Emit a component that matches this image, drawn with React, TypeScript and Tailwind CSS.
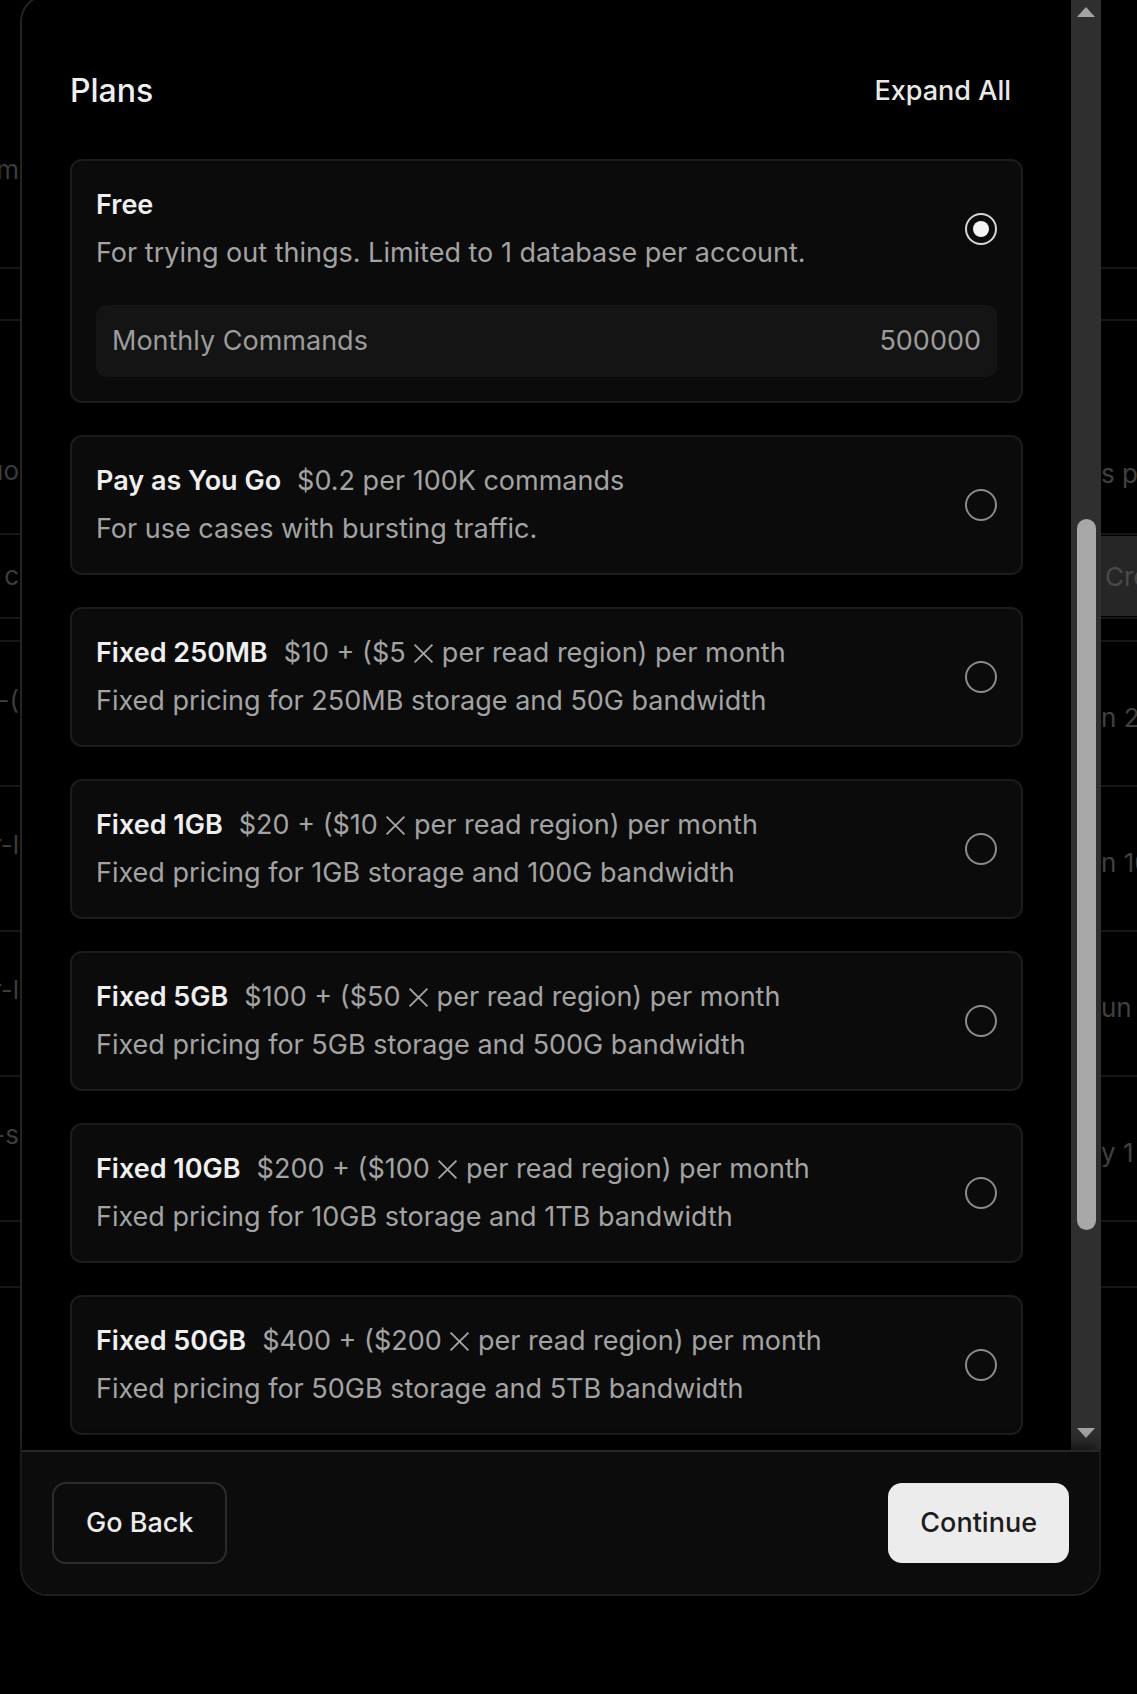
import React from "react";

type Plan = {
  name: string;
  price?: string;
  base?: string;
  per?: string;
  desc: string;
};

const plans: Plan[] = [
  { name: "Pay as You Go", price: "$0.2 per 100K commands", desc: "For use cases with bursting traffic." },
  { name: "Fixed 250MB", base: "$10", per: "$5", desc: "Fixed pricing for 250MB storage and 50G bandwidth" },
  { name: "Fixed 1GB", base: "$20", per: "$10", desc: "Fixed pricing for 1GB storage and 100G bandwidth" },
  { name: "Fixed 5GB", base: "$100", per: "$50", desc: "Fixed pricing for 5GB storage and 500G bandwidth" },
  { name: "Fixed 10GB", base: "$200", per: "$100", desc: "Fixed pricing for 10GB storage and 1TB bandwidth" },
  { name: "Fixed 50GB", base: "$400", per: "$200", desc: "Fixed pricing for 50GB storage and 5TB bandwidth" },
  { name: "Fixed 100GB", base: "$800", per: "$400", desc: "Fixed pricing for 100GB storage and 10TB bandwidth" },
];

function Cross() {
  return (
    <svg
      width="21"
      height="21"
      viewBox="0 0 20 20"
      fill="none"
      stroke="currentColor"
      strokeWidth="1.8"
      className="inline-block align-[-2px]"
    >
      <path d="M1.5 1.5 18.5 18.5M18.5 1.5 1.5 18.5" />
    </svg>
  );
}

function Radio({ checked }: { checked?: boolean }) {
  return (
    <span
      className={
        checked
          ? "flex h-[32px] w-[32px] shrink-0 items-center justify-center rounded-full border-2 border-[#d6d6d6]"
          : "flex h-[32px] w-[32px] shrink-0 items-center justify-center rounded-full border-2 border-[#8c8c8c]"
      }
    >
      {checked && <span className="h-[16px] w-[16px] rounded-full bg-[#f4f4f4]" />}
    </span>
  );
}

function PlanCard({ plan }: { plan: Plan }) {
  return (
    <div className="rounded-[12px] border-2 border-[#1c1c1c] bg-[#0b0b0b] p-[24px]">
      <div className="flex items-center justify-between gap-6">
        <div className="flex min-w-0 flex-col gap-[8px]">
          <div className="whitespace-nowrap text-[27px] leading-[40px]">
            <span className="mr-[16px] font-semibold text-[#efefef]">{plan.name}</span>
            {plan.price ? (
              <span className="text-[#a3a3a3]">{plan.price}</span>
            ) : (
              <span className="text-[#a3a3a3]">
                {plan.base} + ({plan.per} <Cross /> per read region) per month
              </span>
            )}
          </div>
          <div className="whitespace-nowrap text-[27px] leading-[40px] text-[#a3a3a3]">{plan.desc}</div>
        </div>
        <Radio />
      </div>
    </div>
  );
}

function EdgeRow({
  h,
  left,
  right,
  leftTop,
  rightTop,
}: {
  h: string;
  left: string;
  right: string;
  leftTop: string;
  rightTop: string;
}) {
  return (
    <div className={`flex items-start justify-between border-b-2 border-[#161616] ${h}`}>
      <div className={`flex w-[19px] justify-end overflow-hidden text-[26px] leading-[40px] text-[#3c3c3c] ${leftTop}`}>
        <span className="whitespace-nowrap">{left}</span>
      </div>
      <div className={`w-[36px] overflow-hidden text-[26px] leading-[40px] text-[#404040] ${rightTop}`}>
        <span className="whitespace-nowrap">{right}</span>
      </div>
    </div>
  );
}

function Background() {
  return (
    <div className="flex flex-col">
      <div className="flex h-[269px] flex-col justify-start border-b-2 border-[#161616]">
        <div className="mt-[150px] flex w-[19px] justify-end overflow-hidden text-[26px] leading-[40px] text-[#3c3c3c]">
          <span className="whitespace-nowrap">um</span>
        </div>
      </div>
      <div className="h-[52px] border-b-2 border-[#161616]" />
      <EdgeRow h="h-[214px]" left="uo" right="s pl" leftTop="mt-[130px]" rightTop="mt-[133px]" />
      <div className="flex h-[84px] items-center justify-between border-b-2 border-[#161616]">
        <div className="flex w-[19px] justify-end overflow-hidden text-[26px] leading-[40px] text-[#3c3c3c]">
          <span className="whitespace-nowrap">r c</span>
        </div>
        <div className="w-[36px] overflow-hidden">
          <span className="flex h-[80px] w-[36px] items-center bg-[#262626] pl-[4px] text-[26px] text-[#4a4a4a]">Create</span>
        </div>
      </div>
      <div className="h-[23px] border-b-2 border-[#161616]" />
      <EdgeRow h="h-[145px]" left="r-(" right="n 2" leftTop="mt-[38px]" rightTop="mt-[56px]" />
      <EdgeRow h="h-[145px]" left="r-l" right="n 10" leftTop="mt-[38px]" rightTop="mt-[56px]" />
      <EdgeRow h="h-[145px]" left="r-l" right="un 5" leftTop="mt-[38px]" rightTop="mt-[56px]" />
      <EdgeRow h="h-[145px]" left="r-s" right="y 1" leftTop="mt-[38px]" rightTop="mt-[56px]" />
      <div className="h-[66px] border-b-2 border-[#161616]" />
    </div>
  );
}

export default function App() {
  return (
    <div className="relative h-[1694px] w-full overflow-hidden bg-black font-['Inter',sans-serif] antialiased">
      <Background />

      <div className="absolute left-[20px] top-[-6px] flex h-[1602px] w-[1081px] flex-col rounded-[28px] border-2 border-[#242424] bg-black">
        <div className="flex min-h-0 flex-1">
          <div className="min-w-0 flex-1 overflow-hidden px-[48px] pt-[71px]">
            <div className="flex h-[48px] items-center justify-between">
              <h2 className="text-[32px] font-medium leading-[48px] text-[#efefef]">Plans</h2>
              <button className="mr-[12px] text-[27px] font-medium leading-[40px] text-[#e8e8e8]">Expand All</button>
            </div>

            <div className="mt-[44px] flex flex-col gap-[32px]">
              <div className="rounded-[12px] border-2 border-[#1c1c1c] bg-[#0b0b0b] p-[24px]">
                <div className="flex items-center justify-between gap-6">
                  <div className="flex flex-col gap-[8px]">
                    <div className="text-[27px] font-semibold leading-[40px] text-[#efefef]">Free</div>
                    <div className="text-[27px] leading-[40px] text-[#a3a3a3]">
                      For trying out things. Limited to 1 database per account.
                    </div>
                  </div>
                  <Radio checked />
                </div>
                <div className="mt-[32px] flex items-center justify-between rounded-[10px] bg-[#141414] px-[16px] py-[16px] text-[27px] leading-[40px] text-[#9c9c9c]">
                  <span>Monthly Commands</span>
                  <span>500000</span>
                </div>
              </div>

              {plans.map((p) => (
                <PlanCard key={p.name} plan={p} />
              ))}
            </div>
          </div>

          <div className="mr-[-2px] flex w-[30px] shrink-0 flex-col bg-[#2f2f2f]">
            <div className="flex h-[30px] shrink-0 justify-center pt-[11px]">
              <div className="h-0 w-0 border-x-[9px] border-b-[10px] border-x-transparent border-b-[#a3a3a3]" />
            </div>
            <div className="min-h-0 flex-1">
              <div className="mx-auto mt-[493px] h-[711px] w-[19px] rounded-full bg-[#a8a8a8]" />
            </div>
            <div className="flex h-[30px] shrink-0 justify-center pt-[8px]">
              <div className="h-0 w-0 border-x-[9px] border-t-[10px] border-x-transparent border-t-[#a3a3a3]" />
            </div>
          </div>
        </div>

        <div className="flex shrink-0 items-center justify-between rounded-b-[26px] border-t-2 border-[#262626] bg-[#0c0c0c] p-[30px] shadow-[0_-6px_14px_rgba(0,0,0,0.6)]">
          <button className="rounded-[14px] border-2 border-[#2c2c2c] bg-[#0c0c0c] px-[32px] py-[19px] text-[27px] font-medium leading-[40px] text-[#ececec]">
            Go Back
          </button>
          <button className="rounded-[14px] bg-[#ececec] px-[32px] py-[20px] text-[27px] font-medium leading-[40px] text-[#1c1c1c]">
            Continue
          </button>
        </div>
      </div>
    </div>
  );
}
